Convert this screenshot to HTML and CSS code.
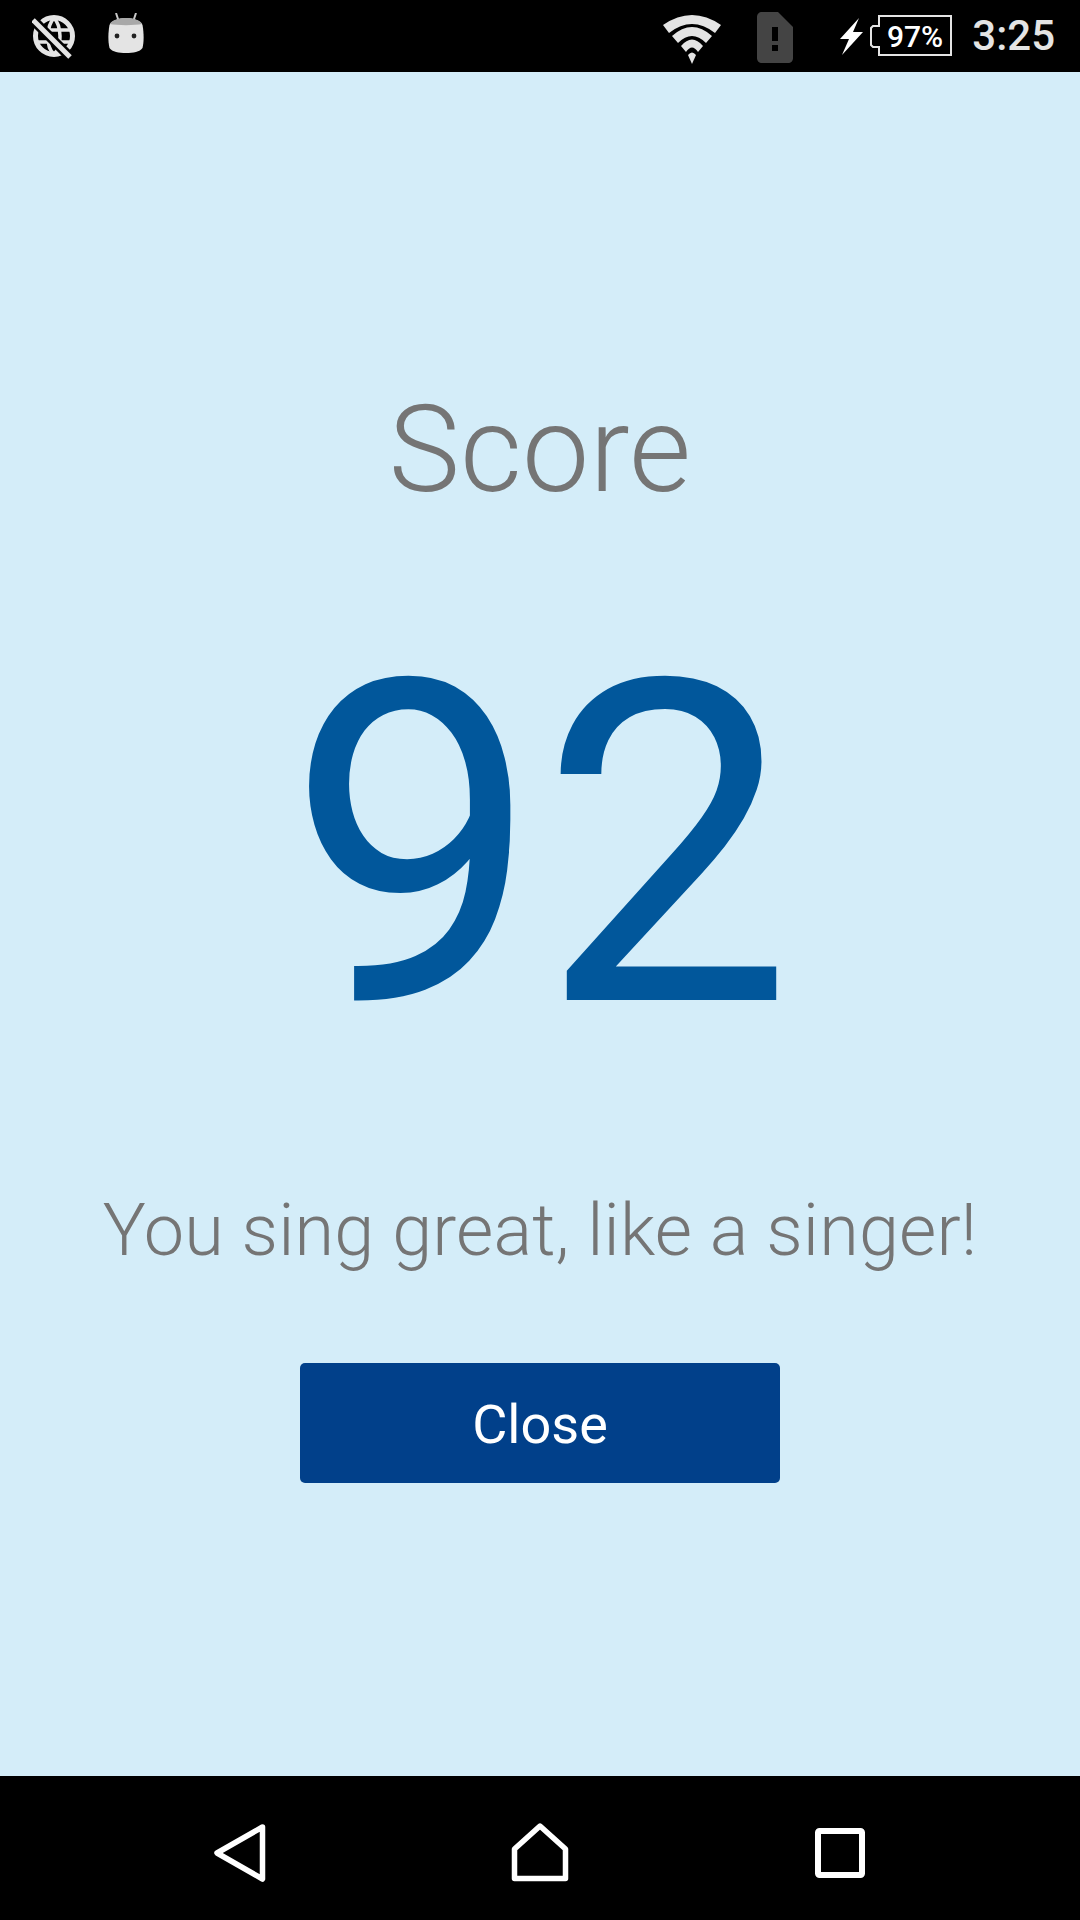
FILE: index.html
```html
<!DOCTYPE html>
<html lang="en">
<head>
    <meta charset="UTF-8">
    <title>Score</title>
    <link rel="stylesheet" href="styles.css">
</head>
<body>
    <div class="status-bar">
        <div class="status-left">
            <svg class="icon-globe" width="44" height="46" viewBox="0 0 44 46">
                <circle cx="22" cy="23" r="18.500" fill="none" stroke="#e4e4e4" stroke-width="5"/>
                <path d="M22 5C15 12 13 34 22 41M22 5C29 12 31 34 22 41M5 17H39M5 29H39" fill="none" stroke="#e4e4e4" stroke-width="3.500"/>
                <path d="M1 7L38 44" stroke="#000" stroke-width="10"/>
                <path d="M1 7L38 44" stroke="#e4e4e4" stroke-width="5"/>
            </svg>
            <svg class="icon-android" width="38" height="42" viewBox="0 0 38 42">
                <path d="M9 0L12 9M29 0L26 9" stroke="#c8c8c8" stroke-width="2"/>
                <path d="M2.500 12C4 8 11 5 19 5C27 5 34 8 35.500 12C37 20 37 29 35.500 35C33 39 26 40 19 40C12 40 5 39 2.500 35C1 29 1 20 2.500 12Z" fill="#e4e4e4"/>
                <path d="M2.800 11C5 7.500 11 5 19 5C27 5 33 7.500 35.200 11C28 12.500 10 12.500 2.800 11Z" fill="#a8a8a8"/>
                <circle cx="10" cy="23" r="2.400" fill="#222"/>
                <circle cx="27" cy="23" r="2.400" fill="#222"/>
            </svg>
        </div>
        <div class="status-right">
            <svg class="icon-wifi" width="58" height="49" viewBox="0 0 58 49">
                <path d="M0 10Q29 -10 58 10L52 18Q29 0 6 18Z" fill="#e4e4e4"/>
                <path d="M9 21Q29 3 49 21L43 28Q29 14 15 28Z" fill="#e4e4e4"/>
                <path d="M18 31Q29 18 40 31L35 37Q29 28 23 37Z" fill="#e4e4e4"/>
                <path d="M25 40Q29 35 33 40L29 49Z" fill="#e4e4e4"/>
            </svg>
            <svg class="icon-sim" width="36" height="51" viewBox="0 0 36 51">
                <path d="M5 0H21L36 15V46C36 49 34 51 31 51H5C2 51 0 49 0 46V5C0 2 2 0 5 0Z" fill="#444"/>
                <rect x="15" y="15" width="6" height="14" fill="#000"/>
                <rect x="15" y="33" width="6" height="6" fill="#000"/>
            </svg>
            <svg class="icon-bolt" width="24" height="37" viewBox="0 0 24 37">
                <path d="M19 0L0 21H9L2 37L23 14H13Z" fill="#fff"/>
            </svg>
            <svg class="battery" width="82" height="41" viewBox="0 0 82 41">
                <path d="M9 1H81V40H9V32H3L1 30V13L3 11H9Z" fill="none" stroke="#e4e4e4" stroke-width="2"/>
                <text class="battery-text" x="45" y="32" text-anchor="middle">97%</text>
            </svg>
            <div class="clock">3:25</div>
        </div>
    </div>

    <div class="content">
        <h1 class="score-label">Score</h1>
        <div class="score-value">92</div>
        <p class="score-message">You sing great, like a singer!</p>
        <button class="close-btn" type="button">Close</button>
    </div>

    <div class="nav-bar">
        <div class="nav-item">
            <svg width="52" height="58" viewBox="0 0 52 58">
                <path d="M48.500 3L3 29L48.500 55Z" fill="none" stroke="#fff" stroke-width="5.500" stroke-linejoin="round"/>
            </svg>
        </div>
        <div class="nav-item">
            <svg width="60" height="60" viewBox="0 0 60 60">
                <path d="M30 3L55.500 26V55.500H4.500V26Z" fill="none" stroke="#fff" stroke-width="5.500" stroke-linejoin="round"/>
            </svg>
        </div>
        <div class="nav-item">
            <svg width="50" height="50" viewBox="0 0 50 50">
                <rect x="3" y="3" width="44" height="44" rx="1.500" fill="none" stroke="#fff" stroke-width="6"/>
            </svg>
        </div>
    </div>
</body>
</html>
```

FILE: styles.css
```css
* { box-sizing: border-box; }
html, body { margin: 0; height: 100%; }
body { width: 1080px; height: 1920px; display: flex; flex-direction: column; font-family: Roboto, "Liberation Sans", sans-serif; background-color: #d4edf9; }

.status-bar { height: 72px; background: #000; display: flex; justify-content: space-between; align-items: center; padding: 0 25px 0 32px; }
.status-left { display: flex; align-items: center; gap: 31px; }
.icon-android { margin-top: -4px; }
.status-right { display: flex; align-items: center; }
.icon-wifi { margin-right: 36px; margin-top: 6px; }
.icon-sim { margin-right: 47px; margin-top: 3px; }
.icon-bolt { margin-right: 6px; }
.battery { margin-right: 20px; margin-top: -1px; }
.battery-text { fill: #fff; font-size: 30px; font-weight: 500; }
.clock { color: #e4e4e4; font-size: 42px; font-weight: 500; line-height: 48px; }

.content { flex: 1; display: flex; flex-direction: column; align-items: center; }
.score-label { margin: 308px 0 0; font-size: 120px; font-weight: 300; line-height: 140px; letter-spacing: 0.2px; color: #757575; }
.score-value { margin-top: 102px; font-size: 450px; line-height: 450px; color: #01579b; }
.score-message { margin: 117px 0 0; font-size: 72px; font-weight: 300; line-height: 84px; letter-spacing: 0.16px; color: #757575; }
.close-btn { margin-top: 90px; width: 480px; height: 120px; padding-top: 4px; border: none; border-radius: 5px; background-color: #01408a; color: white; font-family: inherit; font-size: 54px; }

.nav-bar { height: 144px; padding-top: 10px; background: #000; display: flex; justify-content: center; align-items: center; }
.nav-item { width: 300px; display: flex; justify-content: center; }
```
